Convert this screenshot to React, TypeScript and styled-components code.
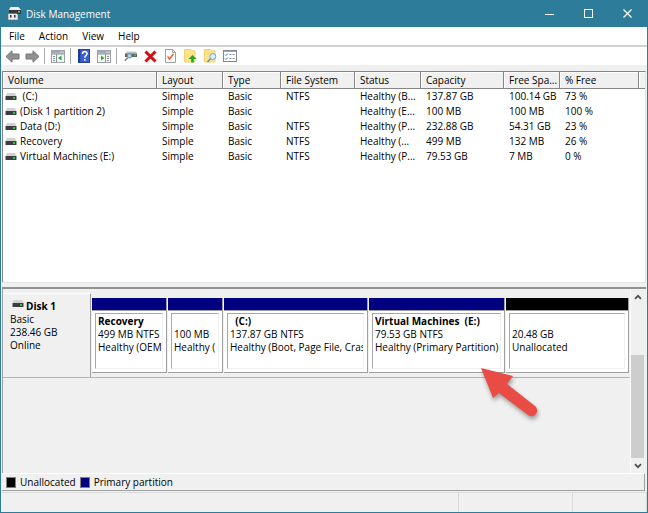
import React from "react";
import styled, { createGlobalStyle } from "styled-components";

const Global = createGlobalStyle`
  * { box-sizing: border-box; }
  html, body, #root { height: 100%; margin: 0; }
  body { font-family: "Open Sans", "Noto Sans", sans-serif; font-size: 10px; line-height: 13px; color: #000; }
  button { font: inherit; color: inherit; border: 0; padding: 0; background: none; }
`;

const Window = styled.div`
  position: relative;
  display: flex;
  flex-direction: column;
  min-height: 100vh;
  background: #f0f0f0;
  border: 1px solid #2d7d9a;
  border-top: 0;
  overflow: hidden;
`;

const TitleBar = styled.header`
  display: flex;
  align-items: center;
  height: 27px;
  padding-left: 6px;
  gap: 4px;
  background: #2d7d9a;
  color: #fff;
`;

const Title = styled.h1`
  flex: 1;
  margin: 0;
  font-size: 10px;
  font-weight: 400;
  line-height: 16px;
`;

const WindowControls = styled.div`
  display: flex;
`;

const WindowButton = styled.button`
  display: grid;
  place-items: center;
  width: 39px;
  height: 27px;
`;

const MenuBar = styled.nav`
  display: flex;
  align-items: center;
  gap: 14px;
  height: 18px;
  padding-left: 8px;
  background: #fff;
`;

const MenuItem = styled.button`
  line-height: 16px;
`;

const Toolbar = styled.div`
  display: flex;
  align-items: center;
  height: 20px;
  padding-left: 3px;
  background: #fff;
  border-top: 2px solid #d2d2d2;
`;

const ToolButton = styled.button`
  display: grid;
  place-items: center;
  width: 16px;
  height: 16px;
  margin-right: 4px;
`;

const ToolDivider = styled.span`
  width: 1px;
  height: 16px;
  margin-right: 5px;
  background: #a8a8a8;
`;

const VolumePane = styled.section`
  flex: 1 0 auto;
  margin: 6px 1px 0;
  background: #fff;
  border: 1px solid #858585;
  border-right-color: #e3e3e3;
  border-bottom: 0;
`;

const VolumeTable = styled.table`
  width: 100%;
  border-collapse: separate;
  border-spacing: 0;
  table-layout: fixed;
`;

const HeadCell = styled.th<{ $width?: number }>`
  width: ${(p) => (p.$width ? `${p.$width}px` : "auto")};
  height: 17px;
  padding: 1px 0 0 5px;
  overflow: hidden;
  text-align: left;
  white-space: nowrap;
  font-weight: 400;
  background: #f0f0f0;
  border-right: 1px solid #858585;
  border-bottom: 1px solid #858585;
  box-shadow: inset 1px 1px #fff;
  &:last-child { border-right: 0; }
`;

const Cell = styled.td`
  height: 15px;
  padding: 1px 0 0 5px;
  overflow: hidden;
  vertical-align: top;
  white-space: pre;
  &:first-child { padding-left: 2px; }
`;

const VolumeName = styled.span`
  display: flex;
  align-items: center;
  gap: 3px;
`;

const Splitter = styled.div`
  height: 7px;
  margin: 0 1px;
  background: #f0f0f0;
  border-top: 1px solid #e3e3e3;
  border-bottom: 2px solid #929292;
`;

const GraphPane = styled.section`
  display: flex;
  flex: 0 0 184px;
  margin: 0 3px 0 1px;
  border-left: 1px solid #a0a0a0;
`;

const Disks = styled.div`
  flex: 1;
  min-width: 0;
  padding-top: 4px;
`;

const DiskRow = styled.div`
  display: flex;
  height: 85px;
  border-bottom: 1px solid #b4b4b4;
`;

const DiskLabel = styled.div`
  flex: 0 0 88px;
  padding: 6px 0 0 7px;
  border-right: 1px solid #a0a0a0;
  border-top: 1px solid #fff;
`;

const DiskName = styled.div`
  display: flex;
  gap: 2px;
  padding-left: 2px;
  font-weight: 700;
`;

const Partitions = styled.div`
  display: flex;
  flex: 1;
  min-width: 0;
  gap: 1px;
  padding: 5px 1px 4px;
`;

const Partition = styled.div<{ $share: number; $color: string }>`
  display: flex;
  flex: ${(p) => p.$share} 1 0;
  flex-direction: column;
  min-width: 0;
  padding: 0 3px 3px;
  border-right: 1px solid #a0a0a0;
  border-bottom: 1px solid #a0a0a0;
  background: #fff;
  &::before {
    content: "";
    height: 12px;
    margin: 0 -3px 2px;
    flex: none;
    background: ${(p) => p.$color};
    border-bottom: 1px solid #a0a0a0;
  }
`;

const PartitionBody = styled.div`
  flex: 1;
  padding: 1px 0 0 2px;
  border: 1px solid #a8a8a8;
  border-right-color: #f0f0f0;
  border-bottom-color: #f0f0f0;
`;

const Line = styled.div<{ $bold?: boolean }>`
  height: 13px;
  overflow: hidden;
  white-space: pre;
  font-weight: ${(p) => (p.$bold ? 700 : 400)};
`;

const Scrollbar = styled.div`
  display: flex;
  flex-direction: column;
  width: 14px;
  background: #f0f0f0;
  border-left: 1px solid #fafafa;
`;

const ScrollButton = styled.button`
  display: grid;
  place-items: center;
  height: 15px;
`;

const Track = styled.div`
  display: flex;
  flex: 1;
  flex-direction: column;
  justify-content: flex-end;
`;

const Thumb = styled.div`
  height: 67%;
  background: #cdcdcd;
`;

const Legend = styled.footer`
  display: flex;
  align-items: center;
  gap: 4px;
  height: 18px;
  margin: 0 2px 0 1px;
  padding-left: 4px;
  border-top: 1px solid #fff;
  border-right: 1px solid #a0a0a0;
  border-bottom: 1px solid #a0a0a0;
`;

const LegendItem = styled.span`
  display: flex;
  align-items: center;
  gap: 4px;
`;

const Swatch = styled.i<{ $color: string }>`
  width: 10px;
  height: 11px;
  background: ${(p) => p.$color};
  border: 1px solid #808080;
`;

const StatusBar = styled.div`
  display: flex;
  height: 20px;
  margin-top: 1px;
  border-top: 1px solid #dcdcdc;
`;

const StatusPart = styled.span<{ $width?: number }>`
  flex: ${(p) => (p.$width ? `0 0 ${p.$width}px` : "1")};
  border-right: 1px solid #d9d9d9;
`;

const Pointer = styled.svg`
  position: absolute;
  left: 471px;
  top: 360px;
  filter: drop-shadow(1px 3px 2px rgba(0, 0, 0, 0.35));
`;

const DriveIcon = () => (
  <svg width="12" height="8" viewBox="0 0 12 8" aria-hidden="true">
    <path d="M2 0h8l1.500 3h-11z" fill="#d2d2d2" />
    <rect x="0.500" y="3" width="11" height="4" rx="0.500" fill="#3e3e42" />
    <rect x="8" y="4" width="2" height="2" fill="#34c334" />
  </svg>
);

const AppIcon = () => (
  <svg width="15" height="15" viewBox="0 0 15 15" aria-hidden="true">
    <path d="M3.500 1h8L14 4H2z" fill="#f0f0f0" />
    <path d="M2 4h12v4H2z" fill="#35383a" />
    <path d="M11 5h2v1.500h-2z" fill="#3be03b" />
    <path d="M1 7.500h9l1 1.500v5H1z" fill="#ececec" stroke="#6b6b6b" strokeWidth=".6" />
    <path d="M3 9h1.500v2.500H3zM7 9h1.500v2.500H7z" fill="#333" />
  </svg>
);

const Arrow = ({ right }: { right?: boolean }) => (
  <svg width="15" height="13" viewBox="0 0 15 13">
    <path
      d={right ? "M14 6.500 8 .8V4H1v5h7v3.200z" : "M1 6.500 7 .8V4h7v5H7v3.200z"}
      fill="#929292"
      stroke="#747474"
    />
  </svg>
);

const PaneIcon = ({ right }: { right?: boolean }) => (
  <svg width="14" height="13" viewBox="0 0 14 13">
    <rect x=".5" y=".5" width="13" height="12" fill="#f7f7f7" stroke="#9a9fa8" />
    <path d="M1 1h12v2.500H1z" fill="#a4abb5" />
    <path d="M9.500 2h1M11.500 2h1" stroke="#fff" />
    <path d="M1 4h12" stroke="#8b919b" />
    <path d={right ? "M8.500 4v8" : "M5.500 4v8"} stroke="#8b919b" />
    <path d={right ? "M10 6.500h2M10 8.500h2M10 10.500h2" : "M2 6.500h2M2 8.500h2M2 10.500h2"} stroke="#8b919b" />
    <path d={right ? "M4 5.500v5L7.500 8z" : "M10.500 5.500v5L7 8z"} fill="#22b32a" />
  </svg>
);

const HelpIcon = () => (
  <svg width="12" height="14" viewBox="0 0 12 14">
    <rect x=".5" y=".5" width="11" height="13" fill="#3a5fcc" stroke="#26439a" />
    <path d="M1.500 1v12" stroke="#203a88" strokeWidth="1.500" />
    <path d="M4.500 5c0-3.300 4.600-3 4.600-.4 0 2-2.300 1.900-2.300 4.200M6.800 10v1.800" fill="none" stroke="#fff" strokeWidth="1.500" />
  </svg>
);

const RescanIcon = () => (
  <svg width="13" height="12" viewBox="0 0 13 12">
    <path d="M3 1.500h9l1 2H1z" fill="#bcc3c8" />
    <path d="M1 3.500h12V7H1z" fill="#5b666d" />
    <path d="M10 4.500h2v1.300h-2z" fill="#3bd63b" />
    <circle cx="5.500" cy="5.800" r="2.200" fill="#a9d3e8" stroke="#6d8b9b" />
    <path d="m3.800 7.800-3 3" stroke="#8b7b66" strokeWidth="1.500" />
  </svg>
);

const DeleteIcon = () => (
  <svg width="13" height="13" viewBox="0 0 13 13">
    <path d="M1.500 1.500 11.500 11.500M11.500 1.500 1.500 11.500" stroke="#d40f14" strokeWidth="3" />
  </svg>
);

const CheckPageIcon = () => (
  <svg width="11" height="14" viewBox="0 0 11 14">
    <path d="M.5.500h7l3 3v10H.5z" fill="#fff" stroke="#a0a0a0" />
    <path d="M7.500.500v3h3" fill="none" stroke="#a0a0a0" />
    <path d="m2.500 7.500 2 2.500 4-5" fill="none" stroke="#e8642c" strokeWidth="1.600" />
  </svg>
);

const FolderIcon = ({ search }: { search?: boolean }) => (
  <svg width="13" height="14" viewBox="0 0 13 14">
    <path d="M.5.500h6.500L8.500 2H11v11H.5z" fill="#fde28a" stroke="#f0d274" />
    {search ? (
      <>
        <circle cx="8.800" cy="7.500" r="3" fill="#d7effc" stroke="#7ba4bd" />
        <path d="M6.500 9.800 3.500 13" stroke="#7c8d98" strokeWidth="1.600" />
      </>
    ) : (
      <path d="M8.500 6 12.500 10h-2.700v3.500H7.200V10H4.500z" fill="#20aa2c" />
    )}
  </svg>
);

const ListIcon = () => (
  <svg width="14" height="12" viewBox="0 0 14 12">
    <rect x=".5" y=".5" width="13" height="11" fill="#fff" stroke="#7f8893" />
    <path d="M1 1.500h12" stroke="#a4abb5" />
    <path d="m2 4.500 1 1 2-2M2 8.500l1 1 2-2" fill="none" stroke="#2f83c8" />
    <path d="M6.500 4.500h2M9.500 4.500h2M6.500 8.500h2M9.500 8.500h2" stroke="#8b919b" />
  </svg>
);

const Chevron = ({ down }: { down?: boolean }) => (
  <svg width="8" height="6" viewBox="0 0 8 6">
    <path d={down ? "M1 1.200 4 4.200 7 1.200" : "M1 4.800 4 1.800 7 4.800"} fill="none" stroke="#505050" strokeWidth="1.800" />
  </svg>
);

const columns: { label: string; width?: number }[] = [
  { label: "Volume", width: 154 },
  { label: "Layout", width: 66 },
  { label: "Type", width: 58 },
  { label: "File System", width: 74 },
  { label: "Status", width: 66 },
  { label: "Capacity", width: 83 },
  { label: "Free Spa...", width: 56 },
  { label: "% Free", width: 79 },
  { label: "" },
];

const volumes = [
  [" (C:)", "Simple", "Basic", "NTFS", "Healthy (B...", "137.87 GB", "100.14 GB", "73 %"],
  ["(Disk 1 partition 2)", "Simple", "Basic", "", "Healthy (E...", "100 MB", "100 MB", "100 %"],
  ["Data (D:)", "Simple", "Basic", "NTFS", "Healthy (P...", "232.88 GB", "54.31 GB", "23 %"],
  ["Recovery", "Simple", "Basic", "NTFS", "Healthy (...", "499 MB", "132 MB", "26 %"],
  ["Virtual Machines (E:)", "Simple", "Basic", "NTFS", "Healthy (P...", "79.53 GB", "7 MB", "0 %"],
];

const NAVY = "#000080";

const partitions = [
  { name: "Recovery", size: "499 MB NTFS", state: "Healthy (OEM", share: 68, color: NAVY },
  { name: "", size: "100 MB", state: "Healthy (", share: 48, color: NAVY },
  { name: "  (C:)", size: "137.87 GB NTFS", state: "Healthy (Boot, Page File, Cras", share: 137, color: NAVY },
  { name: "Virtual Machines  (E:)", size: "79.53 GB NTFS", state: "Healthy (Primary Partition)", share: 129, color: NAVY },
  { name: "", size: "20.48 GB", state: "Unallocated", share: 116, color: "#000" },
];

export default function App() {
  return (
    <>
      <Global />
      <Window>
        <TitleBar>
          <AppIcon />
          <Title>Disk Management</Title>
          <WindowControls>
            <WindowButton aria-label="Minimize">
              <svg width="10" height="10"><path d="M0 5.500h9" stroke="#fff" /></svg>
            </WindowButton>
            <WindowButton aria-label="Maximize">
              <svg width="10" height="10"><rect x=".5" y=".5" width="8" height="8" fill="none" stroke="#fff" /></svg>
            </WindowButton>
            <WindowButton aria-label="Close">
              <svg width="10" height="10"><path d="m.5.500 8 8m0-8-8 8" stroke="#fff" strokeWidth="1.200" /></svg>
            </WindowButton>
          </WindowControls>
        </TitleBar>
        <MenuBar>
          {["File", "Action", "View", "Help"].map((m) => <MenuItem key={m}>{m}</MenuItem>)}
        </MenuBar>
        <Toolbar>
          <ToolButton aria-label="Back"><Arrow /></ToolButton>
          <ToolButton aria-label="Forward"><Arrow right /></ToolButton>
          <ToolDivider />
          <ToolButton aria-label="Show console tree"><PaneIcon /></ToolButton>
          <ToolDivider />
          <ToolButton aria-label="Help"><HelpIcon /></ToolButton>
          <ToolButton aria-label="Show action pane"><PaneIcon right /></ToolButton>
          <ToolDivider />
          <ToolButton aria-label="Rescan disks"><RescanIcon /></ToolButton>
          <ToolButton aria-label="Delete"><DeleteIcon /></ToolButton>
          <ToolButton aria-label="Properties"><CheckPageIcon /></ToolButton>
          <ToolButton aria-label="Open"><FolderIcon /></ToolButton>
          <ToolButton aria-label="Explore"><FolderIcon search /></ToolButton>
          <ToolButton aria-label="Settings"><ListIcon /></ToolButton>
        </Toolbar>
        <VolumePane>
          <VolumeTable>
            <thead>
              <tr>{columns.map((c) => <HeadCell key={c.label} $width={c.width}>{c.label}</HeadCell>)}</tr>
            </thead>
            <tbody>
              {volumes.map(([name, ...rest]) => (
                <tr key={name}>
                  <Cell><VolumeName><DriveIcon />{name}</VolumeName></Cell>
                  {rest.map((v, i) => <Cell key={i}>{v}</Cell>)}
                </tr>
              ))}
            </tbody>
          </VolumeTable>
        </VolumePane>
        <Splitter />
        <GraphPane>
          <Disks>
            <DiskRow>
              <DiskLabel>
                <DiskName><DriveIcon />Disk 1</DiskName>
                <Line>Basic</Line>
                <Line>238.46 GB</Line>
                <Line>Online</Line>
              </DiskLabel>
              <Partitions>
                {partitions.map((p) => (
                  <Partition key={p.state} $share={p.share} $color={p.color}>
                    <PartitionBody>
                      <Line $bold>{p.name}</Line>
                      <Line>{p.size}</Line>
                      <Line>{p.state}</Line>
                    </PartitionBody>
                  </Partition>
                ))}
              </Partitions>
            </DiskRow>
          </Disks>
          <Scrollbar>
            <ScrollButton aria-label="Scroll up"><Chevron /></ScrollButton>
            <Track><Thumb /></Track>
            <ScrollButton aria-label="Scroll down"><Chevron down /></ScrollButton>
          </Scrollbar>
        </GraphPane>
        <Legend>
          <LegendItem><Swatch $color="#000" />Unallocated</LegendItem>
          <LegendItem><Swatch $color={NAVY} />Primary partition</LegendItem>
        </Legend>
        <StatusBar>
          <StatusPart />
          <StatusPart $width={114} />
          <StatusPart $width={74} />
        </StatusBar>
        <Pointer width="72" height="64" viewBox="0 0 72 64" aria-hidden="true">
          <path d="M9 8 41 16 35 24 63 46a5 5 0 0 1-7 9L27 33 21 38z" fill="#e84c44" />
        </Pointer>
      </Window>
    </>
  );
}
